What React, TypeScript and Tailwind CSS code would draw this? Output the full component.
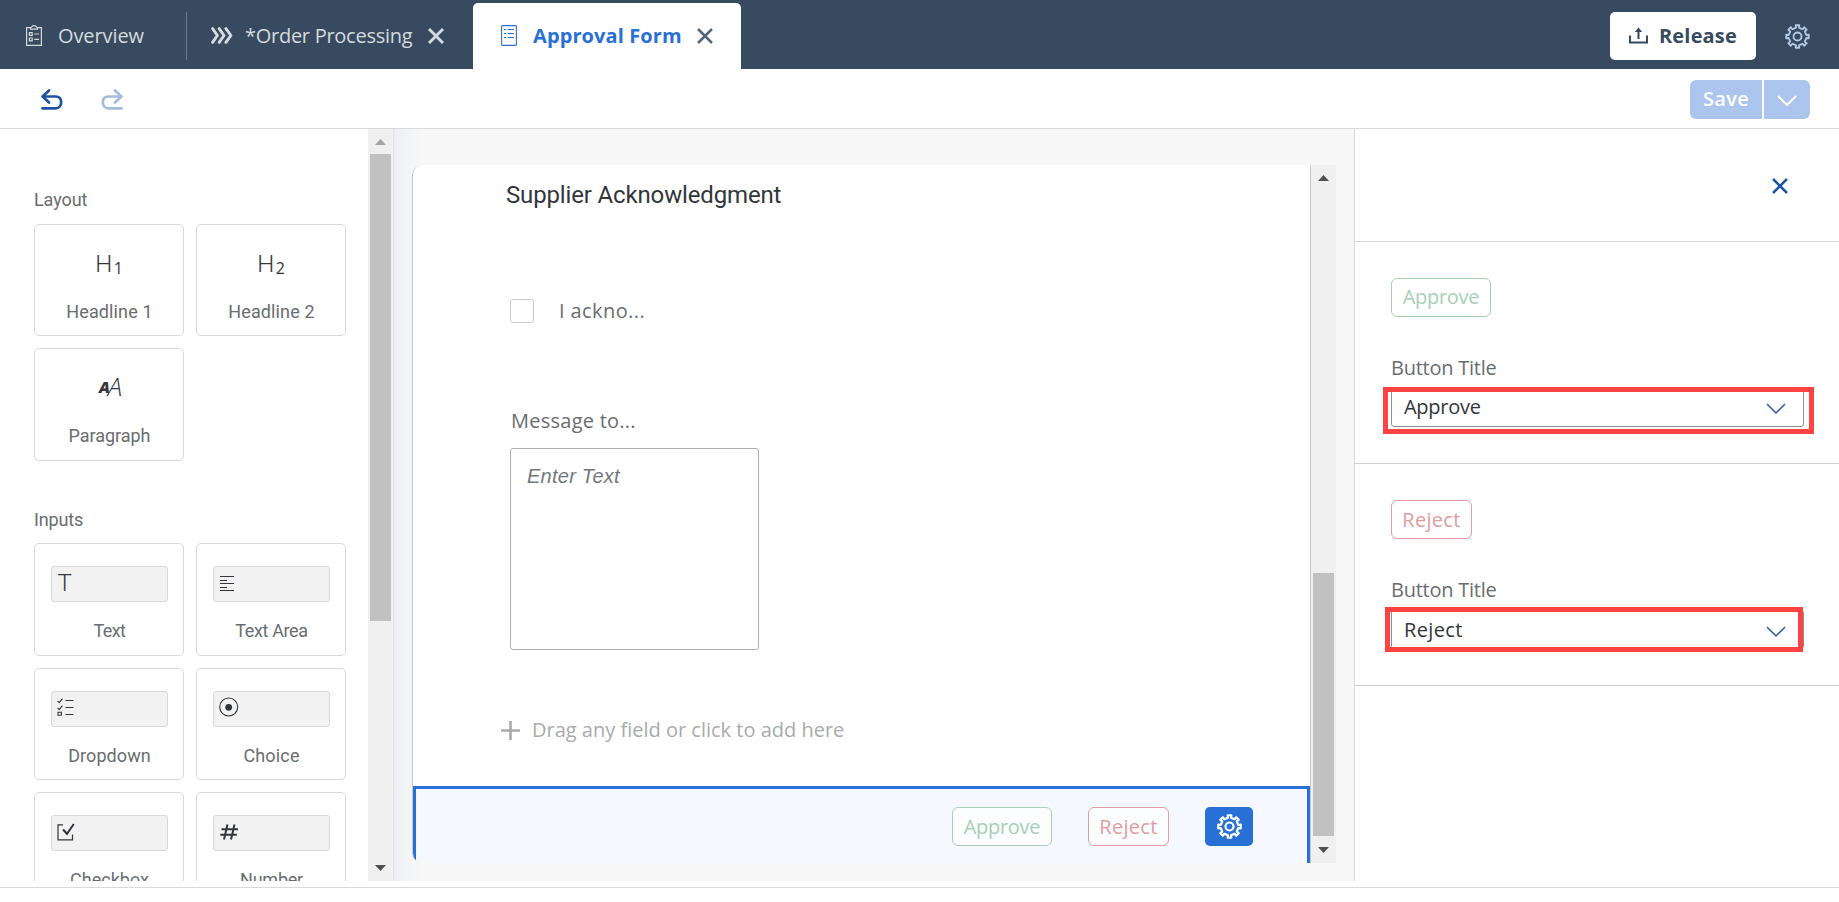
import React from "react";

type IconProps = { className?: string };

/* Outline of an eight-toothed cog centred on the origin. */
const cogPath = (() => {
  const points: string[] = [];
  for (let i = 0; i < 8; i++) {
    const base = (i * Math.PI) / 4 - Math.PI / 2;
    const corners: [number, number][] = [
      [-0.29, 8.7],
      [-0.17, 8.9],
      [-0.16, 11.4],
      [0.16, 11.4],
      [0.17, 8.9],
      [0.29, 8.7],
    ];
    for (const [angle, radius] of corners) {
      const x = Math.cos(base + angle) * radius;
      const y = Math.sin(base + angle) * radius;
      points.push(`${x.toFixed(2)} ${y.toFixed(2)}`);
    }
  }
  return `M${points.join("L")}Z`;
})();

function Cog({ className = "" }: IconProps) {
  return (
    <svg viewBox="-12.5 -12.5 25 25" className={`h-[25px] w-[25px] ${className}`} fill="none" stroke="currentColor" strokeWidth="1.8" strokeLinejoin="round">
      <path d={cogPath} />
      <circle r="4" />
    </svg>
  );
}

function Cross({ className = "" }: IconProps) {
  return (
    <svg viewBox="0 0 16 16" className={`h-4 w-4 ${className}`} fill="none" stroke="currentColor" strokeWidth="2.5">
      <path d="M1 1L15 15M15 1L1 15" />
    </svg>
  );
}

function ChevronDown({ className = "" }: IconProps) {
  return (
    <svg viewBox="0 0 20 12" className={`h-3 w-5 ${className}`} fill="none" stroke="currentColor">
      <path d="M1 1L10 10L19 1" />
    </svg>
  );
}

function ClipboardIcon() {
  return (
    <svg viewBox="0 0 16 21" className="h-[21px] w-4" fill="none" stroke="currentColor" strokeWidth="1.2">
      <path d="M4.5 2.6H.6V20.4H15.4V2.6H11.5" />
      <path d="M4.5 4.2V2.6C5.6 2.6 5.8 .7 8 .7S10.4 2.6 11.5 2.6V4.2Z" />
      <path d="M3.4 7.6H6.2V10.4H3.4ZM3.4 13H6.2V15.8H3.4ZM8.2 9H13M8.2 14.4H13" />
    </svg>
  );
}

function TripleChevron() {
  return (
    <svg viewBox="0 0 22 17" className="h-[17px] w-[22px]" fill="none" stroke="currentColor" strokeWidth="2.9" strokeLinecap="round" strokeLinejoin="round">
      <path d="M1.6 1.6L6.4 8.5L1.6 15.4M8.2 1.6L13 8.5L8.2 15.4M14.9 1.6L19.9 8.5L14.9 15.4" />
    </svg>
  );
}

function FormIcon() {
  return (
    <svg viewBox="0 0 16 21" className="h-[21px] w-4" fill="none" stroke="currentColor" strokeWidth="1.1">
      <rect x=".6" y=".6" width="14.8" height="19.8" rx="1" />
      <path d="M3 4.5H5M6.5 4.5H13M3 8.5H5M6.5 8.5H13M3 12.5H5M6.5 12.5H13" />
    </svg>
  );
}

function ReleaseIcon() {
  return (
    <svg viewBox="0 0 19 17" className="h-[17px] w-[19px]" fill="none" stroke="currentColor" strokeWidth="2">
      <path d="M1 8.5V15.6H18V8.5" />
      <path d="M9.5 12V3" />
      <path d="M5.8 5L9.5 .4L13.2 5Z" fill="currentColor" stroke="none" />
    </svg>
  );
}

function UndoIcon({ className = "" }: IconProps) {
  return (
    <svg viewBox="0 0 22 21" className={`h-[21px] w-[22px] ${className}`} fill="none" stroke="currentColor" strokeWidth="2.7" strokeLinecap="round" strokeLinejoin="round">
      <path d="M8 1.5L1.6 7.5L8 13.5" />
      <path d="M2 7.5H14.5C18.3 7.5 20.2 10 20.2 13.2S18.3 19.3 14.5 19.3H1.4" />
    </svg>
  );
}

function Arrow({ up = false, className = "" }: { up?: boolean; className?: string }) {
  return (
    <svg viewBox="0 0 11 6" className={`h-1.5 w-[11px] ${className}`} fill="currentColor">
      <path d={up ? "M0 6L5.5 0L11 6Z" : "M0 0L5.5 6L11 0Z"} />
    </svg>
  );
}

function Tile({ label, tracking, children }: { label: string; tracking: string; children: React.ReactNode }) {
  return (
    <div className="flex h-full w-[150px] flex-col items-center rounded-[5px] border border-[#d9d9d9] bg-white">
      <div className="flex h-[74px] w-full shrink-0 items-start justify-center">{children}</div>
      <span className={`whitespace-nowrap pl-px font-['Roboto',sans-serif] text-[18px] leading-[25px] text-[#6a6d70] ${tracking}`}>{label}</span>
    </div>
  );
}

function FieldTile({ label, tracking, children }: { label: string; tracking: string; children: React.ReactNode }) {
  return (
    <Tile label={label} tracking={tracking}>
      <div className="mt-[22px] flex h-9 w-[117px] items-center rounded-[3px] border border-[#d9d9d9] bg-[#f2f2f2] pl-[5px] text-[#32363a]">
        {children}
      </div>
    </Tile>
  );
}

function HeadingGlyph({ level }: { level: string }) {
  return (
    <div className="mt-[22px] flex text-[#32363a]">
      <span className="font-['Roboto',sans-serif] text-[24px] font-light leading-[35px] tracking-[-1.5px]">H</span>
      <span className="mt-[9px] pl-[3px] text-[16px] font-medium leading-6">{level}</span>
    </div>
  );
}

const actionStyles = {
  approve: "w-[100px] border-[#a9cfb6] text-[#a9cfb6] tracking-[-0.3px]",
  reject: "w-[81px] border-[#e39c9f] text-[#e39c9f] tracking-[0.3px]",
};

function ActionButton({ kind, className = "" }: { kind: "approve" | "reject"; className?: string }) {
  return (
    <button className={`flex h-[39px] justify-center rounded-md border bg-white/60 text-[20px] leading-[27px] ${actionStyles[kind]} ${className}`}>
      {kind === "approve" ? "Approve" : "Reject"}
    </button>
  );
}

function ButtonSection({ kind }: { kind: "approve" | "reject" }) {
  const approve = kind === "approve";
  return (
    <section className="h-[222px] border-b border-[#cfcfcf] pl-9 pt-9">
      <ActionButton kind={kind} className={approve ? "pt-1" : "pt-[5px]"} />
      <div className="mt-[37px] h-[27px] text-[20px] leading-[27px] tracking-[-0.24px] text-[#6a6d70]">Button Title</div>
      <div className="relative mt-[7px] flex h-[39px] w-[413px] items-start justify-between rounded-[3px] border border-[#89919a] bg-white pl-3 pr-[17px] text-[20px] leading-[27px] text-[#32363a]">
        <span className={approve ? "mt-1 tracking-[-0.28px]" : "mt-[5px] tracking-[0.35px]"}>{approve ? "Approve" : "Reject"}</span>
        <ChevronDown className={`stroke-[1.5] text-[#2a5aa8] ${approve ? "mt-[14px]" : "mt-[15px]"}`} />
        <span
          className={
            approve
              ? "absolute -left-[9px] -top-[2px] h-[47px] w-[431px] border-[5px] border-[#ff4242]"
              : "absolute -left-[7px] -top-1 h-[45px] w-[418px] border-[5px] border-[#ff4242]"
          }
        />
      </div>
    </section>
  );
}

export default function App() {
  return (
    <div className="flex h-[902px] w-[1839px] flex-col overflow-hidden bg-white font-['Open_Sans',sans-serif] text-[#32363a]">
      <header className="flex h-[69px] shrink-0 bg-[#384a5f] text-[20px] leading-[27px] text-[#d5dadd]">
        <div className="flex w-[186px] items-center pl-[26px] pt-0.5">
          <ClipboardIcon />
          <span className="ml-4 tracking-[-0.1px]">Overview</span>
        </div>
        <div className="mt-3 h-12 w-px bg-[#6a7a8e]" />
        <div className="flex w-[286px] items-center pl-6 pt-0.5">
          <TripleChevron />
          <span className="ml-3 whitespace-nowrap tracking-[-0.27px]">*Order Processing</span>
          <Cross className="ml-4 stroke-[2.9]" />
        </div>
        <div className="mt-[3px] flex h-[66px] w-[268px] items-center rounded-t-[5px] bg-white pb-px pl-7 text-[#2970d6]">
          <FormIcon />
          <span className="ml-4 w-[148px] whitespace-nowrap font-bold tracking-[0.1px]">Approval Form</span>
          <Cross className="ml-4 text-[#4f6580]" />
        </div>
        <button className="ml-auto mt-3 flex h-12 w-[146px] items-center rounded-[5px] bg-white pb-px pl-[19px] text-[#384a5f]">
          <ReleaseIcon />
          <span className="ml-[11px] font-bold tracking-[0.17px]">Release</span>
        </button>
        <div className="ml-[29px] mr-[29px] flex items-center pt-1 text-[#b3cbe6]">
          <Cog />
        </div>
      </header>

      <div className="flex h-[60px] shrink-0 items-start border-b border-[#d9d9d9] pl-[41px] pr-[29px]">
        <UndoIcon className="mt-5 text-[#1c53a4]" />
        <UndoIcon className="ml-[38px] mt-5 -scale-x-100 text-[#a5bbdc]" />
        <div className="ml-auto mt-[11px] flex h-[39px] gap-0.5 text-white">
          <button className="flex w-[72px] justify-center rounded-l-md bg-[#abc5ee] pt-[5px] text-[20px] font-semibold leading-[27px] tracking-[0.3px]">Save</button>
          <button className="flex w-[46px] items-center justify-center rounded-r-md bg-[#abc5ee] pt-[3px]">
            <ChevronDown className="stroke-2" />
          </button>
        </div>
      </div>

      <main className="flex h-[752px] shrink-0">
        <aside className="h-full w-[368px] overflow-hidden pl-[34px] pt-[58px]">
          <h2 className="font-['Roboto',sans-serif] text-[18px] leading-[25px] tracking-[-0.09px] text-[#6a6d70]">Layout</h2>
          <div className="mt-3 grid w-[312px] grid-cols-2 grid-rows-[112px_113px] gap-3">
            <Tile label="Headline 1" tracking="tracking-[0.12px]">
              <HeadingGlyph level="1" />
            </Tile>
            <Tile label="Headline 2" tracking="tracking-[0.12px]">
              <HeadingGlyph level="2" />
            </Tile>
            <Tile label="Paragraph" tracking="tracking-[-0.04px]">
              <div className="mt-5 flex pl-[3px] text-[#32363a]">
                <span className="text-[16px] font-extrabold italic leading-[36px]">A</span>
                <span className="-ml-0.5 text-[26px] font-light italic leading-[34px]">A</span>
              </div>
            </Tile>
          </div>
          <h2 className="mt-[46px] font-['Roboto',sans-serif] text-[18px] leading-[25px] tracking-[-0.15px] text-[#6a6d70]">Inputs</h2>
          <div className="mt-[11px] grid w-[312px] grid-cols-2 grid-rows-[113px_112px_112px] gap-3">
            <FieldTile label="Text" tracking="tracking-[-0.6px]">
              <span className="-mt-0.5 pl-px font-['Roboto',sans-serif] text-[24px] font-light leading-[30px]">T</span>
            </FieldTile>
            <FieldTile label="Text Area" tracking="tracking-[-0.36px]">
              <svg viewBox="0 0 14 16" className="-mt-px ml-px h-4 w-3.5" fill="none" stroke="currentColor" strokeWidth="1.2">
                <path d="M0 .5H14M0 4.5H7M0 7.5H14M0 11.5H7M0 14.5H14" />
              </svg>
            </FieldTile>
            <FieldTile label="Dropdown" tracking="tracking-[0.08px]">
              <svg viewBox="0 0 17 18" className="-mt-1 h-[18px] w-[17px]" fill="none" stroke="currentColor" strokeWidth="1.1">
                <path d="M.5 2.8L2.2 4.6L5.4 .6M.5 9.8L2.2 11.6L5.4 7.6M1 14.2H4.4V17.3H1ZM8.5 2.5H16.5M8.5 9.5H16.5M8.5 16.5H16.5" />
              </svg>
            </FieldTile>
            <FieldTile label="Choice" tracking="tracking-[0.16px]">
              <svg viewBox="0 0 20 20" className="-mt-1 h-5 w-5" fill="none" stroke="currentColor" strokeWidth="1.1">
                <circle cx="9.7" cy="10" r="9" />
                <circle cx="9.7" cy="10.3" r="3.4" fill="currentColor" stroke="none" />
              </svg>
            </FieldTile>
            <FieldTile label="Checkbox" tracking="tracking-[0px]">
              <svg viewBox="0 0 18 18" className="-mt-0.5 h-[18px] w-[18px]" fill="none" stroke="currentColor" strokeWidth="1.2">
                <path d="M6 1.8H1V16.8H15.5V11.5" />
                <path d="M6 6.5L10 10.8L16.8 1" strokeWidth="2" />
              </svg>
            </FieldTile>
            <FieldTile label="Number" tracking="tracking-[-0.24px]">
              <svg viewBox="0 0 19 16" className="-mt-0.5 ml-px h-4 w-[19px]" fill="none" stroke="currentColor" strokeWidth="2">
                <path d="M1.5 5.2H18M.3 10.8H16.8M7.5 .5L4 15.5M14.5 .5L11 15.5" />
              </svg>
            </FieldTile>
          </div>
        </aside>

        <div className="flex h-full w-[26px] flex-col items-center border-r border-[#e5e5e5] bg-[#f0f0f0]">
          <Arrow up className="mt-2.5 shrink-0 text-[#a3a3a3]" />
          <div className="mt-[9px] h-[467px] w-[21px] shrink-0 bg-[#c1c1c1]" />
          <Arrow className="mb-2.5 mt-auto shrink-0 text-[#505050]" />
        </div>

        <div className="flex h-full w-[960px] bg-[#f7f7f7] bg-[linear-gradient(to_right,#eceef1_0px,#f3f4f5_14px,#f7f7f7_28px)] pl-[18px] pt-9">
          <div className="flex h-[698px] w-[899px] flex-col overflow-hidden rounded-l-[10px] border-x border-[#c9c9c9] bg-white">
            <div className="flex h-[621px] shrink-0 flex-col items-start">
              <h1 className="ml-[93px] mt-[13px] whitespace-nowrap font-['Roboto',sans-serif] text-[24px] leading-[35px] tracking-[-0.15px]">Supplier Acknowledgment</h1>
              <div className="ml-[97px] mt-[84px] flex h-[27px] items-center text-[#6a6d70]">
                <span className="mt-px h-6 w-6 rounded-[3px] border border-[#c8cacf]" />
                <span className="ml-[25px] whitespace-nowrap text-[20px] leading-[27px] tracking-[0.4px]">I ackno...</span>
              </div>
              <div className="ml-[98px] mt-[83px] whitespace-nowrap text-[20px] leading-[27px] tracking-[0.25px] text-[#6a6d70]">Message to...</div>
              <div className="ml-[97px] mt-[14px] h-[202px] w-[249px] rounded-[3px] border border-[#afafaf] pl-4 pt-4 font-['Liberation_Sans',sans-serif] text-[20px] italic leading-[22px] tracking-[0.25px] text-[#74777a]">
                Enter Text
              </div>
              <div className="ml-[88px] mt-[66px] flex items-center text-[#a9abad]">
                <svg viewBox="0 0 19 19" className="mt-0.5 h-[19px] w-[19px]" stroke="currentColor" strokeWidth="2.6">
                  <path d="M9.5 0V19M0 9.5H19" />
                </svg>
                <span className="ml-3 whitespace-nowrap text-[20px] leading-[27px]">Drag any field or click to add here</span>
              </div>
            </div>
            <div className="flex h-[77px] shrink-0 items-start justify-end border-x-[3px] border-t-[3px] border-[#2970d6] bg-[#f5f9ff] pr-[54px] pt-[18px]">
              <ActionButton kind="approve" className="pt-[5px]" />
              <ActionButton kind="reject" className="ml-9 pt-[5px]" />
              <button className="ml-9 flex h-[39px] w-12 items-center justify-center rounded-[5px] bg-[#2970d6] text-white">
                <Cog className="stroke-[2.2]" />
              </button>
            </div>
          </div>
          <div className="flex h-[698px] w-[25px] flex-col items-center bg-[#f0f0f0] text-[#505050]">
            <Arrow up className="mt-2.5 shrink-0" />
            <div className="mt-auto h-[263px] w-[21px] shrink-0 bg-[#c1c1c1]" />
            <Arrow className="mb-2.5 mt-[11px] shrink-0" />
          </div>
        </div>

        <aside className="h-full w-[485px] border-l border-[#d9d9d9] bg-white">
          <div className="flex h-[113px] items-start justify-end border-b border-[#d9d9d9] pr-[51px] pt-[49px] text-[#1c53a4]">
            <Cross />
          </div>
          <ButtonSection kind="approve" />
          <ButtonSection kind="reject" />
        </aside>
      </main>

      <footer className="mt-1.5 h-[15px] border-t border-[#d9d9d9]" />
    </div>
  );
}
